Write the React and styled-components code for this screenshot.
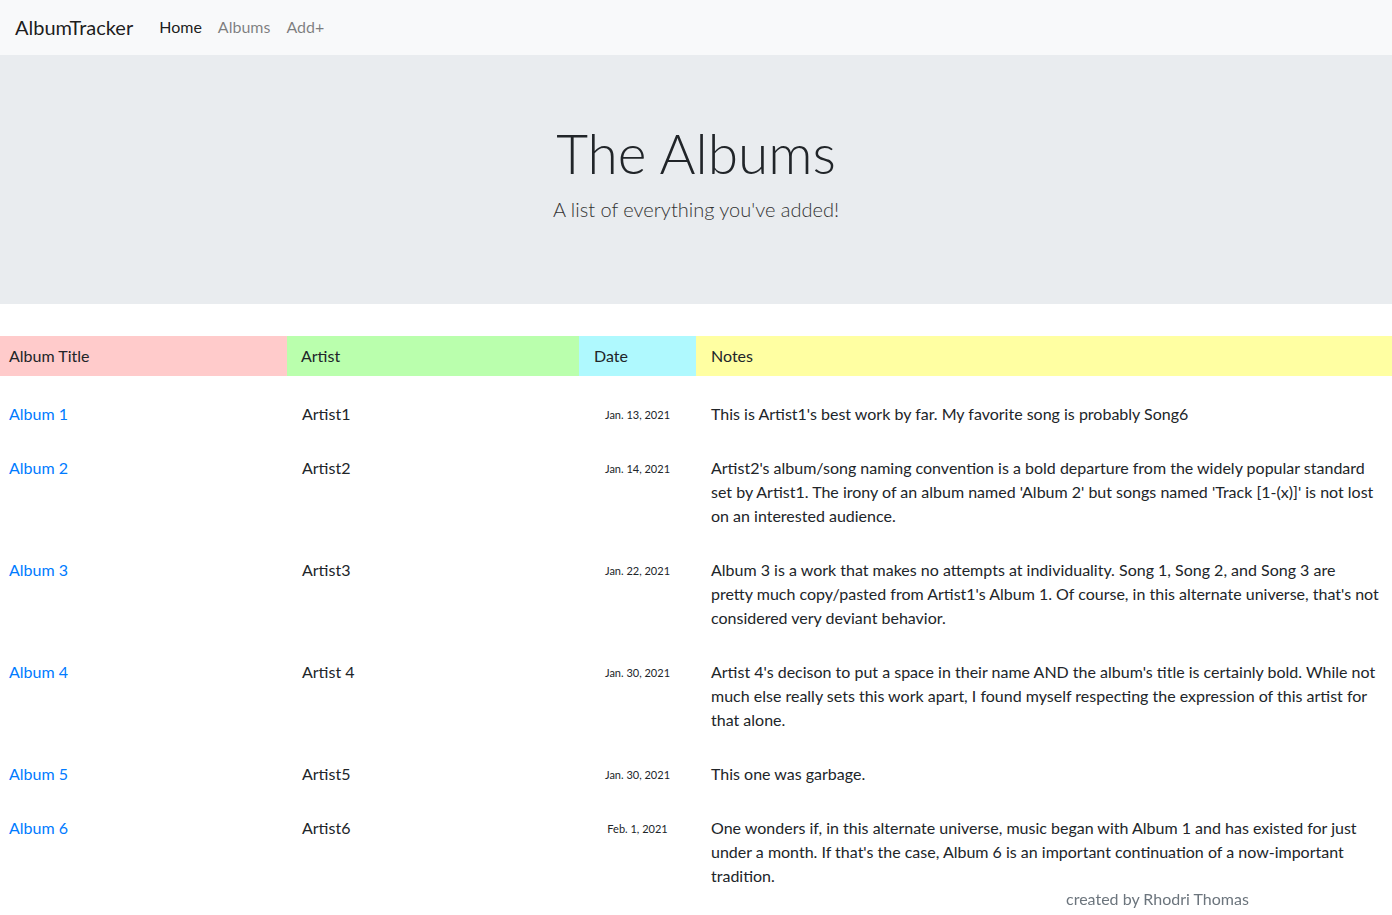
import React from 'react';
import styled, { createGlobalStyle } from 'styled-components';

const GlobalStyle = createGlobalStyle`
    body {
        margin: 0;
        font-family: Lato, "Noto Sans", sans-serif;
        font-size: 16px;
        line-height: 1.5;
        color: #212529;
        background: #fff;
    }
`;

const Navbar = styled.nav`
    display: flex;
    align-items: center;
    height: 55px;
    padding: 0 15px 2px;
    background: #f8f9fa;
    box-sizing: border-box;
`;

const Brand = styled.a`
    font-size: 20px;
    color: rgba(0, 0, 0, 0.9);
    margin-right: 18px;
    text-decoration: none;
`;

const NavLink = styled.a`
    padding: 0 8px;
    color: ${(p) => (p.active ? 'rgba(0, 0, 0, 0.9)' : 'rgba(0, 0, 0, 0.5)')};
    text-decoration: none;
`;

const Jumbotron = styled.header`
    background: #e9ecef;
    height: 249px;
    box-sizing: border-box;
    padding-top: 65px;
    text-align: center;
    margin-bottom: 32px;
`;

const Title = styled.h1`
    margin: 0;
    font-size: 55px;
    font-weight: 300;
    line-height: 1.2;
`;

const Lead = styled.p`
    margin: 8px 0 0;
    font-size: 20px;
    font-weight: 300;
    color: #333;
`;

const Row = styled.div`
    display: grid;
    grid-template-columns: 287px 292px 117px 1fr;
`;

const HeadCell = styled.div`
    background: ${(p) => p.bg};
    height: 40px;
    display: flex;
    align-items: center;
    padding-left: ${(p) => p.pad || 15}px;
`;

const Body = styled.div`
    padding-top: 11px;
    padding-bottom: 12px;
`;

const Cell = styled.div`
    padding: 15px 15px;
    padding-left: ${(p) => p.pad || 15}px;
`;

const AlbumLink = styled.a`
    color: #007bff;
    text-decoration: none;
`;

const DateCell = styled.div`
    padding: 16px 0 14px;
    text-align: center;
    font-size: 11px;
    line-height: 24px;
`;

const NotesCell = styled.div`
    padding: 15px 12px 15px 15px;
`;

const Footer = styled.footer`
    position: fixed;
    left: 1066px;
    bottom: 4px;
    color: #6c757d;
`;

const albums = [
    { title: 'Album 1', artist: 'Artist1', date: 'Jan. 13, 2021', notes: "This is Artist1's best work by far. My favorite song is probably Song6" },
    { title: 'Album 2', artist: 'Artist2', date: 'Jan. 14, 2021', notes: "Artist2's album/song naming convention is a bold departure from the widely popular standard set by Artist1. The irony of an album named 'Album 2' but songs named 'Track [1-(x)]' is not lost on an interested audience." },
    { title: 'Album 3', artist: 'Artist3', date: 'Jan. 22, 2021', notes: "Album 3 is a work that makes no attempts at individuality. Song 1, Song 2, and Song 3 are pretty much copy/pasted from Artist1's Album 1. Of course, in this alternate universe, that's not considered very deviant behavior." },
    { title: 'Album 4', artist: 'Artist 4', date: 'Jan. 30, 2021', notes: "Artist 4's decison to put a space in their name AND the album's title is certainly bold. While not much else really sets this work apart, I found myself respecting the expression of this artist for that alone." },
    { title: 'Album 5', artist: 'Artist5', date: 'Jan. 30, 2021', notes: 'This one was garbage.' },
    { title: 'Album 6', artist: 'Artist6', date: 'Feb. 1, 2021', notes: "One wonders if, in this alternate universe, music began with Album 1 and has existed for just under a month. If that's the case, Album 6 is an important continuation of a now-important tradition." },
];

export default function App() {
    return (
        <>
            <GlobalStyle />
            <Navbar>
                <Brand href="#">AlbumTracker</Brand>
                <NavLink href="#" active>Home</NavLink>
                <NavLink href="#">Albums</NavLink>
                <NavLink href="#">Add+</NavLink>
            </Navbar>
            <Jumbotron>
                <Title>The Albums</Title>
                <Lead>A list of everything you've added!</Lead>
            </Jumbotron>
            <Row>
                <HeadCell bg="#ffcbcb" pad={9}>Album Title</HeadCell>
                <HeadCell bg="#baffad" pad={14}>Artist</HeadCell>
                <HeadCell bg="#aff9fe">Date</HeadCell>
                <HeadCell bg="#ffffa2">Notes</HeadCell>
            </Row>
            <Body>
                {albums.map((a) => (
                    <Row key={a.title}>
                        <Cell pad={9}>
                            <AlbumLink href="#">{a.title}</AlbumLink>
                        </Cell>
                        <Cell pad={15}>{a.artist}</Cell>
                        <DateCell>{a.date}</DateCell>
                        <NotesCell>{a.notes}</NotesCell>
                    </Row>
                ))}
            </Body>
            <Footer>created by Rhodri Thomas</Footer>
        </>
    );
}
